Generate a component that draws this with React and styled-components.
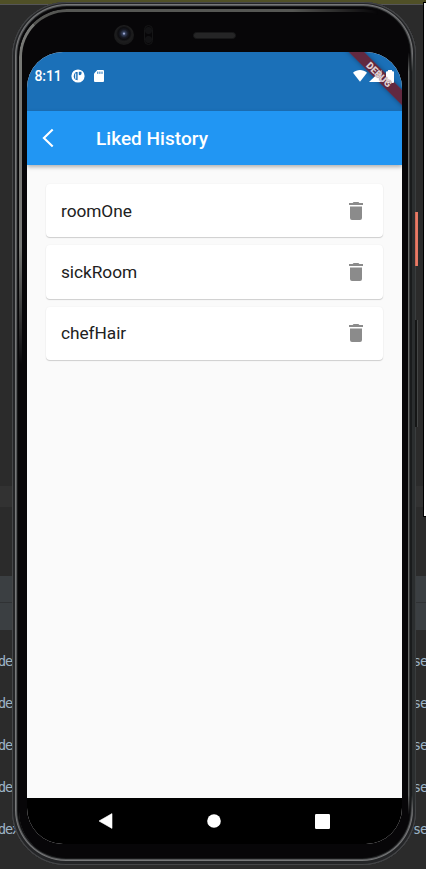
import React from "react";
import styled, { createGlobalStyle } from "styled-components";

const Global = createGlobalStyle`
  * { box-sizing: border-box; }
  body { margin: 0; background: #2b2b2b; font-family: Roboto, sans-serif; }
`;

const Desktop = styled.div`
  position: relative;
  width: 426px;
  height: 869px;
  overflow: hidden;
  background: #2b2b2b;
`;

const Editor = styled.div`
  height: 869px;
  display: flex;
  flex-direction: column;
`;

const Strip = styled.div`
  flex: none;
  height: ${(p) => p.$h}px;
  background: ${(p) => p.$bg || "transparent"};
`;

const CodeLine = styled.div`
  flex: none;
  height: 42px;
  display: flex;
  justify-content: space-between;
  align-items: center;
  font: 13.5px/42px "DejaVu Sans Mono", monospace;
  letter-spacing: -1.1px;
  color: #9db4c6;
  white-space: pre;
`;

const CodeStart = styled.span`
  margin-left: -2px;
`;

const CodeEnd = styled.span`
  width: 13px;
`;

const SideWindow = styled.div`
  position: absolute;
  top: 2px;
  right: -4px;
  width: 7px;
  height: 515px;
  border: 1px solid #000;
  background: #fff;
`;

const Phone = styled.div`
  position: absolute;
  left: 12px;
  top: 2px;
  width: 404px;
  height: 863px;
  padding: 50px 14px 21px 15px;
  border-radius: 55px 53px 54px 54px;
  background: #070608;
  box-shadow:
    inset 0 0 0 1px #454648,
    inset 0 -1px 0 3px #242527,
    inset 0 -1px 0 4px #777879,
    inset 0 -1px 0 5px #555658,
    inset 0 -1px 0 6px #171819;
`;

/* Polished bevel that fades out down the left side and along the top. */
const Bevel = styled.div`
  position: absolute;
  inset: 7px 7px 7px 7px;
  border-radius: 48px 46px 46px 46px;
  border: 3px solid #777875;
  border-top-color: #555653;
  border-right-color: transparent;
  border-bottom-color: transparent;
  mask-image: linear-gradient(180deg, #000 0 28%, transparent 42%),
    linear-gradient(90deg, #000 0 70%, transparent 92%);
  mask-composite: intersect;
`;

const RightRail = styled.div`
  position: absolute;
  top: 50px;
  right: 0;
  width: 8px;
  height: 763px;
  background: linear-gradient(90deg, #686a69 0 1px, #3a3c3c 1px 2px, #191b1c 2px 4px, #2b2e2f 4px 7px, #3a3d3e 7px);
  mask-image: linear-gradient(180deg, transparent, #000 20px calc(100% - 20px), transparent);
`;

const SideButton = styled.div`
  position: absolute;
  left: 415px;
  top: ${(p) => p.$top}px;
  width: 3px;
  height: ${(p) => p.$h}px;
  background: ${(p) => p.$bg};
`;

const Sensors = styled.div`
  position: absolute;
  left: 102px;
  top: 22px;
  display: flex;
  align-items: center;
  height: 22px;
`;

const Lens = styled.div`
  width: 20px;
  height: 20px;
  border-radius: 50%;
  background: radial-gradient(circle at 50% 43%, #9ba5cf 0 0.5px, #34405c 1.6px, #171923 4px, #0d0d10 6px, #1d1d1e 8px, #19191a 10px);
`;

const Proximity = styled.div`
  margin-left: 10px;
  width: 9px;
  height: 20px;
  border: 1px solid #151516;
  border-radius: 5px;
  background: radial-gradient(circle at 50% 25%, #121214 0 3px, transparent 4px),
    radial-gradient(circle at 50% 75%, #121214 0 3px, transparent 4px);
`;

const Speaker = styled.div`
  margin-left: 40px;
  width: 43px;
  height: 7px;
  border-radius: 4px;
  background: #252526;
  border: 1px solid #171718;
`;

const Screen = styled.div`
  position: relative;
  width: 375px;
  height: 792px;
  border-radius: 36px;
  overflow: hidden;
  display: flex;
  flex-direction: column;
  background: #fafafa;
`;

const StatusBar = styled.div`
  flex: none;
  height: 59px;
  padding: 0 8px 11px 7.5px;
  display: flex;
  align-items: center;
  background: #1b70b8;
  color: #fff;
`;

const Clock = styled.span`
  width: 36.5px;
  font-size: 14px;
  font-weight: 500;
  line-height: 16px;
  letter-spacing: -0.1px;
`;

const StatusIcons = styled.div`
  display: flex;
  align-items: center;
  gap: ${(p) => p.$gap}px;
`;

/* The system icons are painted above the debug ribbon. */
const SystemIcons = styled(StatusIcons)`
  position: relative;
  z-index: 2;
  margin-left: auto;
`;

const AppBar = styled.header`
  flex: none;
  position: relative;
  height: 54px;
  padding-left: 14px;
  display: flex;
  align-items: center;
  background: #2196f3;
  color: #fff;
  box-shadow: 0 2px 4px rgba(0, 0, 0, 0.3);
`;

const BackButton = styled.button`
  width: 55px;
  height: 24px;
  padding: 0;
  border: 0;
  background: none;
  display: flex;
  align-items: center;
`;

const Title = styled.h1`
  margin: 2px 0 0;
  font-size: 19px;
  font-weight: 500;
  line-height: 24px;
  letter-spacing: 0.03px;
`;

const List = styled.main`
  flex: 1;
  padding: 19px 19px 0;
  display: flex;
  flex-direction: column;
  gap: 8px;
`;

const Card = styled.div`
  height: 53.3px;
  padding: 0 20px 0 15px;
  display: flex;
  align-items: center;
  justify-content: space-between;
  border-radius: 4px;
  background: #fff;
  color: #212121;
  font-size: 17.3px;
  line-height: 22px;
  letter-spacing: -0.05px;
  box-shadow: 0 1px 1px rgba(0, 0, 0, 0.17), 0 0 2px rgba(0, 0, 0, 0.06);
`;

const NavBar = styled.nav`
  flex: none;
  height: 46px;
  padding: 0 72px 0 72px;
  display: flex;
  align-items: center;
  justify-content: space-between;
  background: #000;
`;

const DebugBanner = styled.div`
  position: absolute;
  top: 17px;
  right: -27px;
  width: 100px;
  height: 11px;
  transform: rotate(45deg);
  background: rgba(110, 28, 42, 0.85);
  box-shadow: 0 0 5px rgba(0, 0, 0, 0.35);
`;

const DebugLabel = styled(DebugBanner)`
  z-index: 3;
  background: none;
  box-shadow: none;
  color: #dccfd3;
  font-size: 9.8px;
  font-weight: 900;
  line-height: 11px;
  text-align: center;
  text-shadow: 0 0 1px #6b2436;
`;

const TrashIcon = () => (
  <svg width="14" height="18" viewBox="0 0 14 18" fill="#8b8b8b">
    <path d="M1 4.5h12V16a2 2 0 0 1-2 2H3a2 2 0 0 1-2-2zM0 1h3.6l1-1h4.8l1 1H14v2H0z" />
  </svg>
);

const BadgeIcon = () => (
  <svg width="14" height="14" viewBox="0 0 14 14">
    <circle cx="7" cy="7" r="6.6" fill="#fff" />
    <path d="M6.6 3v8.2C3.9 11 2.8 9.4 2.8 7.2c0-2 .9-3.4 2.2-4.2z" fill="#1b70b8" />
    <path d="M7.8 2.8h2.7v2a1.7 1.7 0 0 1-2.7 1z" fill="#1b70b8" />
    <path d="M4.2 4.4h1v5.4h-1z" fill="#fff" />
  </svg>
);

const SdIcon = () => (
  <svg width="10" height="12" viewBox="0 0 10 12">
    <path d="M3.3 0H9a1 1 0 0 1 1 1v10a1 1 0 0 1-1 1H1a1 1 0 0 1-1-1V3.4z" fill="#fff" />
    <path d="M3.8 1.6v2.3M5.9 1.6v2.3M8 1.6v2.3" stroke="#1b70b8" strokeWidth="1" />
  </svg>
);

const WifiIcon = () => (
  <svg width="14" height="12" viewBox="0 0 14 12">
    <path d="M0 2.8C4-.8 10-.8 14 2.8L7 11.8z" fill="#fff" />
  </svg>
);

const SignalIcon = () => (
  <svg width="15" height="12" viewBox="0 0 15 12">
    <path d="M0 12 12.5 0v12z" fill="#fff" />
  </svg>
);

const BatteryIcon = () => (
  <svg width="8" height="13" viewBox="0 0 8 13">
    <path d="M2 0h4v1.3h1a1 1 0 0 1 1 1V12a1 1 0 0 1-1 1H1a1 1 0 0 1-1-1V2.3a1 1 0 0 1 1-1h1z" fill="#fff" />
  </svg>
);

const BackIcon = () => (
  <svg width="13" height="20" viewBox="0 0 13 20">
    <path d="M11.7 1.5 2.9 10l8.8 8.5" fill="none" stroke="#fff" strokeWidth="2.1" />
  </svg>
);

const codeLines = ["de", "de", "de", "de", "dex"];
const rooms = ["roomOne", "sickRoom", "chefHair"];

export default function App() {
  return (
    <Desktop>
      <Global />
      <Editor>
        <Strip $h={4} $bg="#505027" />
        <Strip $h={1} $bg="#555557" />
        <Strip $h={481} />
        <Strip $h={21} $bg="#323232" />
        <Strip $h={69} />
        <Strip $h={26} $bg="#3b3f42" />
        <Strip $h={1} $bg="#303234" />
        <Strip $h={27} $bg="#3b3f42" />
        <Strip $h={10} />
        {codeLines.map((text, i) => (
          <CodeLine key={i}>
            <CodeStart>{text}</CodeStart>
            <CodeEnd>se</CodeEnd>
          </CodeLine>
        ))}
      </Editor>
      <SideWindow />
      <Phone>
        <Bevel />
        <RightRail />
        <Sensors>
          <Lens />
          <Proximity />
          <Speaker />
        </Sensors>
        <Screen>
          <StatusBar>
            <Clock>8:11</Clock>
            <StatusIcons $gap={9}>
              <BadgeIcon />
              <SdIcon />
            </StatusIcons>
            <SystemIcons $gap={2}>
              <WifiIcon />
              <SignalIcon />
              <BatteryIcon />
            </SystemIcons>
          </StatusBar>
          <AppBar>
            <BackButton aria-label="Back">
              <BackIcon />
            </BackButton>
            <Title>Liked History</Title>
          </AppBar>
          <List>
            {rooms.map((room) => (
              <Card key={room}>
                <span>{room}</span>
                <TrashIcon />
              </Card>
            ))}
          </List>
          <NavBar>
            <svg width="14" height="16" viewBox="0 0 14 16">
              <path d="M0 8 13 .6v14.8z" fill="#fff" stroke="#fff" strokeWidth=".6" />
            </svg>
            <svg width="14" height="14" viewBox="0 0 14 14">
              <circle cx="7" cy="7" r="6.8" fill="#fff" />
            </svg>
            <svg width="15" height="15" viewBox="0 0 15 15">
              <rect width="15" height="15" rx="1.2" fill="#fff" />
            </svg>
          </NavBar>
          <DebugBanner />
          <DebugLabel>DEBUG</DebugLabel>
        </Screen>
      </Phone>
      <SideButton $top={212} $h={54} $bg="linear-gradient(90deg, #b8604f, #ee7b66 40%, #df7562)" />
      <SideButton $top={320} $h={107} $bg="linear-gradient(90deg, #151616 0 2px, #444646 2px)" />
    </Desktop>
  );
}
